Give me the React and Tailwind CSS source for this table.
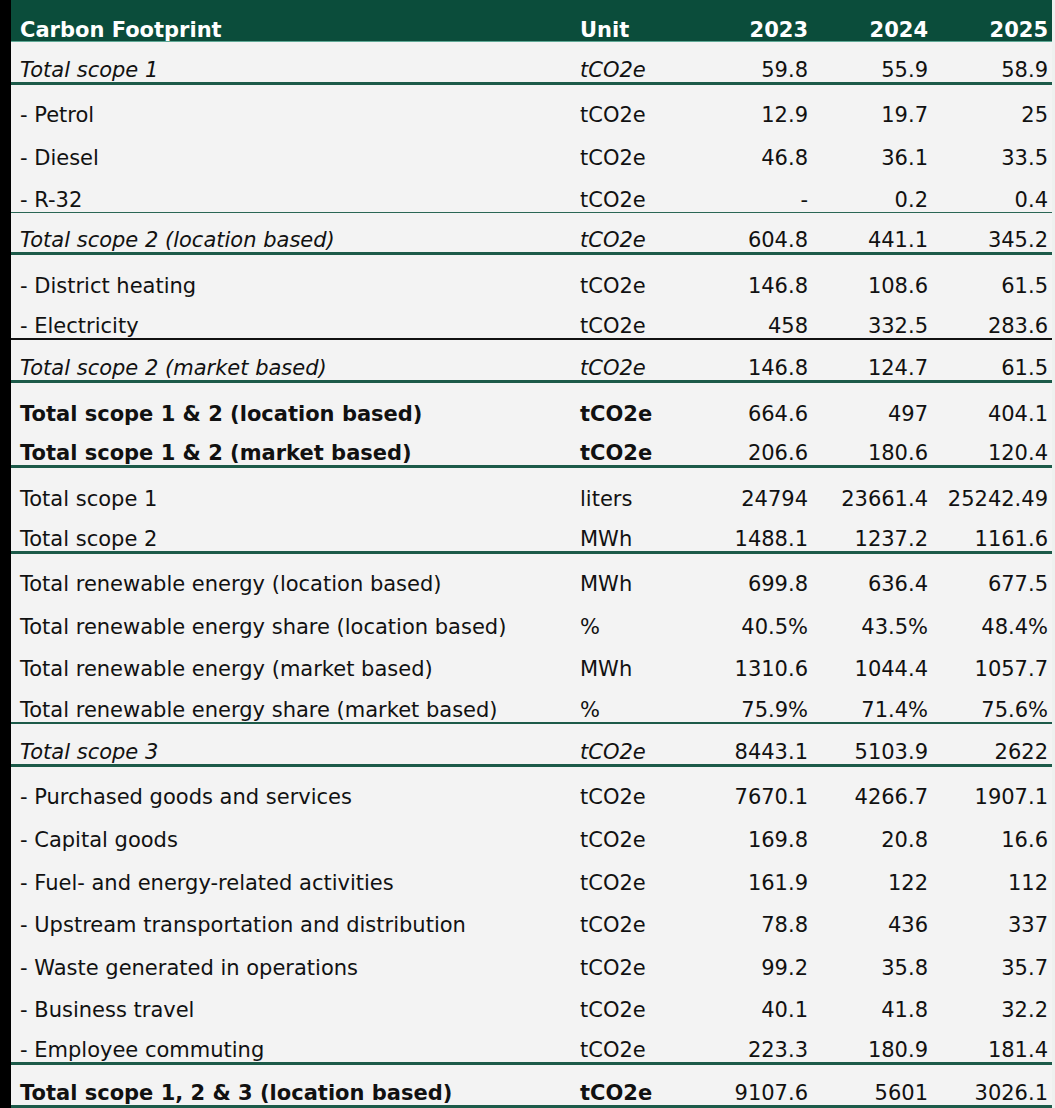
import React from "react";

const rows = [
  { label: "Total scope 1", unit: "tCO2e", v: ["59.8", "55.9", "58.9"], style: "italic", line: "green" },
  { label: "- Petrol", unit: "tCO2e", v: ["12.9", "19.7", "25"] },
  { label: "- Diesel", unit: "tCO2e", v: ["46.8", "36.1", "33.5"] },
  { label: "- R-32", unit: "tCO2e", v: ["-", "0.2", "0.4"], line: "thin" },
  { label: "Total scope 2 (location based)", unit: "tCO2e", v: ["604.8", "441.1", "345.2"], style: "italic", line: "green" },
  { label: "- District heating", unit: "tCO2e", v: ["146.8", "108.6", "61.5"] },
  { label: "- Electricity", unit: "tCO2e", v: ["458", "332.5", "283.6"], line: "black" },
  { label: "Total scope 2 (market based)", unit: "tCO2e", v: ["146.8", "124.7", "61.5"], style: "italic", line: "green" },
  { label: "Total scope 1 & 2 (location based)", unit: "tCO2e", v: ["664.6", "497", "404.1"], style: "bold" },
  { label: "Total scope 1 & 2 (market based)", unit: "tCO2e", v: ["206.6", "180.6", "120.4"], style: "bold", line: "green" },
  { label: "Total scope 1", unit: "liters", v: ["24794", "23661.4", "25242.49"] },
  { label: "Total scope 2", unit: "MWh", v: ["1488.1", "1237.2", "1161.6"], line: "green" },
  { label: "Total renewable energy (location based)", unit: "MWh", v: ["699.8", "636.4", "677.5"] },
  { label: "Total renewable energy share (location based)", unit: "%", v: ["40.5%", "43.5%", "48.4%"] },
  { label: "Total renewable energy (market based)", unit: "MWh", v: ["1310.6", "1044.4", "1057.7"] },
  { label: "Total renewable energy share (market based)", unit: "%", v: ["75.9%", "71.4%", "75.6%"], line: "green2" },
  { label: "Total scope 3", unit: "tCO2e", v: ["8443.1", "5103.9", "2622"], style: "italic", line: "green" },
  { label: "- Purchased goods and services", unit: "tCO2e", v: ["7670.1", "4266.7", "1907.1"] },
  { label: "- Capital goods", unit: "tCO2e", v: ["169.8", "20.8", "16.6"] },
  { label: "- Fuel- and energy-related activities", unit: "tCO2e", v: ["161.9", "122", "112"] },
  { label: "- Upstream transportation and distribution", unit: "tCO2e", v: ["78.8", "436", "337"] },
  { label: "- Waste generated in operations", unit: "tCO2e", v: ["99.2", "35.8", "35.7"] },
  { label: "- Business travel", unit: "tCO2e", v: ["40.1", "41.8", "32.2"] },
  { label: "- Employee commuting", unit: "tCO2e", v: ["223.3", "180.9", "181.4"], line: "green" },
  { label: "Total scope 1, 2 & 3 (location based)", unit: "tCO2e", v: ["9107.6", "5601", "3026.1"], style: "bold", line: "green" },
];

const lineClass = {
  green: "border-b-[3px] border-[#1c5a49]",
  green2: "border-b-[2px] border-[#1c5a49]",
  thin: "border-b border-[#2a6655]",
  black: "border-b-[2px] border-[#111111]",
};

const Row = ({ row }) => {
  const textStyle = row.style === "italic" ? "italic" : row.style === "bold" ? "font-bold" : "";
  return (
    <div
      className={`grid grid-cols-[569px_108px_120px_120px_120px] items-end h-[42.64px] pb-[1px] pr-[4px] ${lineClass[row.line] || ""}`}
    >
      <div className={`pl-[9px] whitespace-nowrap ${textStyle}`}>{row.label}</div>
      <div className={textStyle}>{row.unit}</div>
      {row.v.map((n, i) => (
        <div key={i} className="text-right">{n}</div>
      ))}
    </div>
  );
};

export default function App() {
  return (
    <div className="flex w-[1055px] h-[1108px] bg-[#eef0ef] overflow-hidden font-['DejaVu_Sans','Verdana',sans-serif] text-[21px] leading-[22px] text-[#111]">
      {/* left dark strip */}
      <div className="w-[11px] bg-black shrink-0" />

      <div className="w-[1041px] shrink-0 bg-[#f3f3f3]">
        {/* Header */}
        <div className="grid grid-cols-[569px_108px_120px_120px_120px] items-end h-[42px] pb-0 pr-[4px] bg-[#0b4d3b] text-white font-bold border-b border-[#5fa896]">
          <div className="pl-[9px]">Carbon Footprint</div>
          <div>Unit</div>
          <div className="text-right">2023</div>
          <div className="text-right">2024</div>
          <div className="text-right">2025</div>
        </div>

        {rows.map((r, i) => (
          <Row key={i} row={r} />
        ))}
      </div>
    </div>
  );
}
